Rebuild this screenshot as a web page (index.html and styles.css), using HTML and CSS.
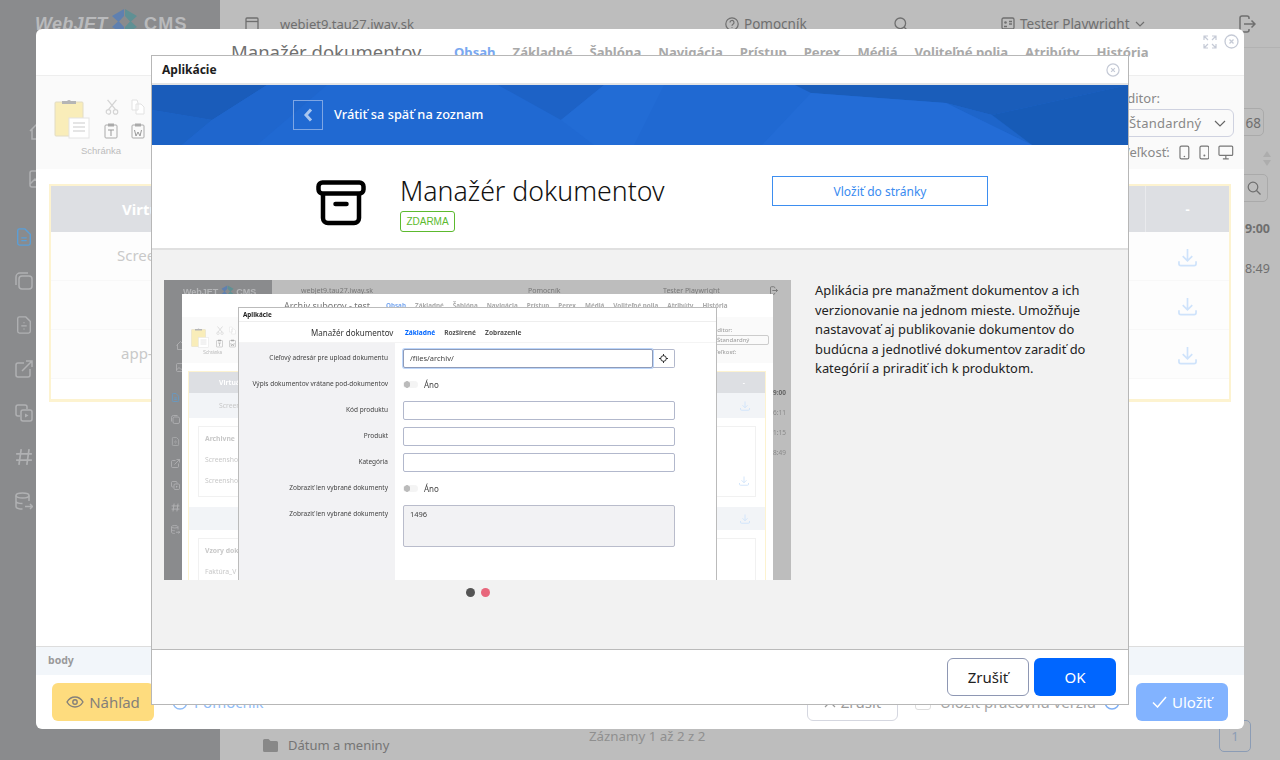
FILE: index.html
```html
<!DOCTYPE html>
<html lang="sk">
  <head>
    <meta charset="UTF-8" />
    <title>Aplikácie</title>
    <link rel="stylesheet" href="styles.css">
  </head>
  <body>
    <svg class="sprites" width="0" height="0">
      <symbol id="i-home" viewBox="0 0 18 18"><path d="M1 9l8-8 8 8M3 7v10h12V7" fill="none" stroke="currentColor" stroke-width="1.500"/></symbol>
      <symbol id="i-pic" viewBox="0 0 18 18"><rect x="1" y="1" width="16" height="16" rx="2" fill="none" stroke="currentColor" stroke-width="1.500"/><path d="M1 14l5-5 4 4 3-2 4 3" fill="none" stroke="currentColor" stroke-width="1.500"/></symbol>
      <symbol id="i-copy" viewBox="0 0 18 18"><rect x="4" y="4" width="13" height="13" rx="3" fill="none" stroke="currentColor" stroke-width="1.500"/><path d="M13 1H5a4 4 0 0 0-4 4v8" fill="none" stroke="currentColor" stroke-width="1.500"/></symbol>
      <symbol id="i-file" viewBox="0 0 16 20"><path d="M3 1h7l5 5v11a2 2 0 0 1-2 2H3a2 2 0 0 1-2-2V3a2 2 0 0 1 2-2zM5 11h6M8 7v1M8 14v1" fill="none" stroke="currentColor" stroke-width="1.500"/></symbol>
      <symbol id="i-ext" viewBox="0 0 18 18"><path d="M9 3H3a2 2 0 0 0-2 2v10a2 2 0 0 0 2 2h10a2 2 0 0 0 2-2V9M7 11L17 1M11 1h6v6" fill="none" stroke="currentColor" stroke-width="1.500"/></symbol>
      <symbol id="i-media" viewBox="0 0 18 18"><path d="M5 12H3a2 2 0 0 1-2-2V3a2 2 0 0 1 2-2h7a2 2 0 0 1 2 2v2" fill="none" stroke="currentColor" stroke-width="1.500"/><rect x="6" y="6" width="11" height="11" rx="2" fill="none" stroke="currentColor" stroke-width="1.500"/><path d="M10 9.500l3.500 2-3.500 2z" fill="currentColor"/></symbol>
      <symbol id="i-hash" viewBox="0 0 16 16"><path d="M5.500 1L3.500 15M12.500 1L10.500 15M1 5.200h14M1 10.800h14" fill="none" stroke="currentColor" stroke-width="1.500"/></symbol>
      <symbol id="i-db" viewBox="0 0 18 18"><ellipse cx="7.500" cy="3.500" rx="6.500" ry="2.500" fill="none" stroke="currentColor" stroke-width="1.500"/><path d="M1 3.500v11c0 1.400 2.900 2.500 6.500 2.500M14 3.500V9M1 9c0 1.400 2.900 2.500 6.500 2.500M10 14.500h7.500M15 12l2.500 2.500L15 17" fill="none" stroke="currentColor" stroke-width="1.500"/></symbol>
      <symbol id="i-down" viewBox="0 0 20 20"><path d="M10 1v12M5 8.500l5 5 5-5M1 14v2.500a2 2 0 0 0 2 2h14a2 2 0 0 0 2-2V14" fill="none" stroke="currentColor" stroke-width="1.800"/></symbol>
      <symbol id="i-clip" viewBox="0 0 36 42"><rect x="1" y="5" width="28" height="34" rx="1" fill="#f9edb9" stroke="#e2dcc4"/><path d="M8 7V4h5a3 3 0 0 1 4 0h5v3z" fill="#b5b5b5"/><rect x="15" y="21" width="20" height="20" fill="#fff" stroke="#e4e4e4"/><path d="M19 26h12M19 30h12M19 34h12" stroke="#ddd" stroke-width="1.500"/></symbol>
      <symbol id="i-scis" viewBox="0 0 16 18"><path d="M3 1l9 11M13 1L4 12" stroke="#d4d4d4" stroke-width="1.500"/><circle cx="4" cy="14.500" r="2.500" fill="none" stroke="#d4d4d4" stroke-width="1.300"/><circle cx="12" cy="14.500" r="2.500" fill="none" stroke="#d4d4d4" stroke-width="1.300"/></symbol>
      <symbol id="i-pages" viewBox="0 0 14 16"><path d="M1 1h5l1 3v7H1zM5 5h5l3 3v7H5z" fill="#fff" stroke="#e2e2e2"/></symbol>
      <symbol id="i-past" viewBox="0 0 14 16"><rect x="1" y="2" width="12" height="13" rx="1" fill="none" stroke="#aaa"/><rect x="4" y="0.500" width="6" height="3" fill="#aaa"/><path d="M4 7h6M7 7v6" stroke="#999"/></symbol>
      <symbol id="i-pasw" viewBox="0 0 14 16"><rect x="1" y="2" width="12" height="13" rx="1" fill="none" stroke="#aaa"/><rect x="4" y="0.500" width="6" height="3" fill="#aaa"/><path d="M3.500 7l1.500 6 2-4 2 4 1.500-6" fill="none" stroke="#999"/></symbol>
    </svg>

    <div class="page">
      <aside class="side">
        <div class="logo">
          <span class="logo-web">WebJET</span>
          <svg class="logo-mark" width="27" height="27" viewBox="0 0 27 27"><path d="M13 1L1 8l6 5.500L1 19l12 7V19l-5-5.500L13 8z" fill="#5f80b0"/><path d="M14 1l12 7-6 5.500 6 5.500-12 7V19l5-5.500L14 8z" fill="#5f9094"/></svg>
          <span class="logo-cms">CMS</span>
        </div>
        <nav class="side-nav">
          <svg class="side-ico side-ico-far"><use href="#i-home"/></svg>
          <svg class="side-ico side-ico-far side-ico-end"><use href="#i-pic"/></svg>
          <svg class="side-ico" viewBox="0 0 16 20"><path d="M3 1h6l6 6v10a2 2 0 0 1-2 2H3a2 2 0 0 1-2-2V3a2 2 0 0 1 2-2zM5 11h6M5 14h6" fill="none" stroke="#5a9fd8" stroke-width="1.500"/></svg>
          <svg class="side-ico"><use href="#i-copy"/></svg>
          <svg class="side-ico"><use href="#i-file"/></svg>
          <svg class="side-ico"><use href="#i-ext"/></svg>
          <svg class="side-ico"><use href="#i-media"/></svg>
          <svg class="side-ico"><use href="#i-hash"/></svg>
          <svg class="side-ico"><use href="#i-db"/></svg>
        </nav>
      </aside>
      <main class="main">
        <header class="top">
          <span class="top-domain">
            <svg width="14" height="14" viewBox="0 0 14 14"><rect x="1" y="1" width="12" height="12" rx="1" fill="none" stroke="currentColor" stroke-width="1.300"/><path d="M1 4.500h12" stroke="currentColor" stroke-width="1.300"/></svg>
            webjet9.tau27.iway.sk
          </span>
          <span class="top-help">
            <svg width="14" height="14" viewBox="0 0 14 14"><circle cx="7" cy="7" r="6.200" fill="none" stroke="currentColor" stroke-width="1.200"/><path d="M5 5.500a2 2 0 1 1 3 1.700c-.7.400-1 .8-1 1.500M7 10.300v.7" fill="none" stroke="currentColor" stroke-width="1.200"/></svg>
            Pomocník
          </span>
          <svg class="top-search" width="14" height="14" viewBox="0 0 14 14"><circle cx="6.300" cy="6.300" r="5.300" fill="none" stroke="currentColor" stroke-width="1.300"/><path d="M10 10l3.500 3.500" stroke="currentColor" stroke-width="1.300"/></svg>
          <span class="top-user">
            <svg width="14" height="13" viewBox="0 0 14 13"><rect x="1" y="1" width="12" height="11" rx="1.500" fill="none" stroke="currentColor" stroke-width="1.300"/><path d="M3 9.500h3M8 4.500h3M8 7h3" stroke="currentColor" stroke-width="1.300"/><circle cx="4.500" cy="5.500" r="1.300" fill="currentColor"/></svg>
            Tester Playwright
            <svg width="10" height="6" viewBox="0 0 10 6"><path d="M1 1l4 4 4-4" fill="none" stroke="currentColor" stroke-width="1.200"/></svg>
          </span>
          <svg class="top-out" width="17" height="18" viewBox="0 0 17 18"><path d="M10 4V3a2 2 0 0 0-2-2H3a2 2 0 0 0-2 2v12a2 2 0 0 0 2 2h5a2 2 0 0 0 2-2v-1M5 9h11M12.500 5.500L16 9l-3.500 3.500" fill="none" stroke="currentColor" stroke-width="1.500"/></svg>
        </header>
        <div class="tail">
          <div class="tail-box">68</div>
          <div class="tail-sort">
            <i class="sort-up"></i>
            <i class="sort-down"></i>
          </div>
          <div class="tail-search">
            <svg width="14" height="14" viewBox="0 0 14 14"><circle cx="6" cy="6" r="4.800" fill="none" stroke="currentColor" stroke-width="1.200"/><path d="M9.500 9.500l4 4" stroke="currentColor" stroke-width="1.200"/></svg>
          </div>
          <div class="tail-time tail-time-b">9:00</div>
          <div class="tail-time">8:49</div>
        </div>
        <footer class="bottom">
          <div class="bottom-tree">
            <svg width="15" height="13" viewBox="0 0 15 13"><path d="M1.500 0h4l2 2h6A1.500 1.500 0 0 1 15 3.500V11.500A1.500 1.500 0 0 1 13.500 13h-12A1.500 1.500 0 0 1 0 11.500v-10A1.500 1.500 0 0 1 1.500 0z" fill="currentColor"/></svg>
            Dátum a meniny
          </div>
          <div class="bottom-info">Záznamy 1 až 2 z 2</div>
          <div class="bottom-page">1</div>
        </footer>
      </main>
    </div>

    <section class="editor">
      <div class="editor-head">
        <h2 class="editor-title">Manažér dokumentov</h2>
        <div class="tabs">
          <span class="tab tab-on">Obsah</span>
          <span class="tab">Základné</span>
          <span class="tab">Šablóna</span>
          <span class="tab">Navigácia</span>
          <span class="tab">Prístup</span>
          <span class="tab">Perex</span>
          <span class="tab">Médiá</span>
          <span class="tab">Voliteľné polia</span>
          <span class="tab">Atribúty</span>
          <span class="tab">História</span>
        </div>
        <div class="editor-win">
          <svg width="14" height="14" viewBox="0 0 14 14"><path d="M1 5V1h4M1 1l4 4M13 5V1H9M13 1L9 5M1 9v4h4M1 13l4-4M13 9v4H9M13 13L9 9" fill="none" stroke="#c5cad6" stroke-width="1.200"/></svg>
          <svg width="15" height="15" viewBox="0 0 15 15"><circle cx="7.500" cy="7.500" r="6.500" fill="none" stroke="#c5cad6" stroke-width="1.300"/><path d="M5.500 5.500l4 4M9.500 5.500l-4 4" stroke="#c5cad6" stroke-width="1.300"/></svg>
        </div>
      </div>
      <div class="ribbon">
        <div class="ribbon-clip">
          <div class="ribbon-tools">
            <svg width="36" height="42"><use href="#i-clip"/></svg>
            <div class="ribbon-small">
              <svg width="16" height="16"><use href="#i-scis"/></svg>
              <svg width="14" height="16"><use href="#i-pages"/></svg>
              <svg width="14" height="16"><use href="#i-past"/></svg>
              <svg width="14" height="16"><use href="#i-pasw"/></svg>
            </div>
          </div>
          <div class="ribbon-label">Schránka</div>
        </div>
        <div class="ribbon-side">
          <div class="ribbon-editor">Editor:</div>
          <div class="ribbon-select">
            <span>Štandardný</span>
            <svg width="12" height="7" viewBox="0 0 12 7"><path d="M1 1l5 5 5-5" fill="none" stroke="#666" stroke-width="1.200"/></svg>
          </div>
          <div class="ribbon-size">
            <span>Veľkosť:</span>
            <svg width="11" height="15" viewBox="0 0 11 15"><rect x="1" y="1" width="9" height="13" rx="1.500" fill="none" stroke="#777" stroke-width="1.200"/><circle cx="5.500" cy="11.500" r=".8" fill="#777"/></svg>
            <svg width="11" height="15" viewBox="0 0 11 15"><rect x="1" y="1" width="9" height="13" rx="1.500" fill="none" stroke="#777" stroke-width="1.200"/><circle cx="5.500" cy="10.500" r="1" fill="#777"/></svg>
            <svg width="16" height="15" viewBox="0 0 16 15"><rect x="1" y="1" width="14" height="9.500" rx="1" fill="none" stroke="#777" stroke-width="1.200"/><path d="M5 14h6M8 11v3" stroke="#777" stroke-width="1.200"/></svg>
          </div>
        </div>
      </div>
      <div class="editor-body">
        <div class="frame">
          <div class="frame-head">
            <span class="frame-th">Virtuálna cesta</span>
            <span class="frame-dash">-</span>
          </div>
          <div class="frame-row">
            <span class="frame-name">Screenshot</span>
            <svg class="frame-down"><use href="#i-down"/></svg>
          </div>
          <div class="frame-row">
            <span class="frame-name"></span>
            <svg class="frame-down"><use href="#i-down"/></svg>
          </div>
          <div class="frame-row frame-last">
            <span class="frame-name frame-name-alt">app-</span>
            <svg class="frame-down"><use href="#i-down"/></svg>
          </div>
        </div>
      </div>
      <div class="crumb">body</div>
      <div class="editor-foot">
        <button class="btn-preview">
          <svg width="18" height="12" viewBox="0 0 18 12"><path d="M1 6c2-3.300 4.700-5 8-5s6 1.700 8 5c-2 3.300-4.700 5-8 5S3 9.300 1 6z" fill="none" stroke="currentColor" stroke-width="1.400"/><circle cx="9" cy="6" r="2.200" fill="none" stroke="currentColor" stroke-width="1.400"/></svg>
          Náhľad
        </button>
        <span class="foot-help">
          <svg width="16" height="16" viewBox="0 0 16 16"><circle cx="8" cy="8" r="7" fill="none" stroke="currentColor" stroke-width="1.300"/></svg>
          Pomocník
        </span>
        <button class="btn-cancel">
          <svg width="12" height="12" viewBox="0 0 12 12"><path d="M1 1l10 10M11 1L1 11" stroke="currentColor" stroke-width="1.200"/></svg>
          Zrušiť
        </button>
        <span class="foot-work">
          <i class="foot-check"></i>
          Uložiť pracovnú verziu
          <svg width="16" height="16" viewBox="0 0 16 16"><circle cx="8" cy="8" r="7" fill="none" stroke="#7fb0f5" stroke-width="1.500"/></svg>
        </span>
        <button class="btn-save">
          <svg width="15" height="12" viewBox="0 0 15 12"><path d="M1 6.500L5.500 11 14 1" fill="none" stroke="currentColor" stroke-width="1.500"/></svg>
          Uložiť
        </button>
      </div>
    </section>

    <section class="apps">
      <div class="apps-head">
        <h3 class="apps-title">Aplikácie</h3>
        <svg width="14" height="14" viewBox="0 0 15 15"><circle cx="7.500" cy="7.500" r="6.500" fill="none" stroke="#c5cad6" stroke-width="1.300"/><path d="M5.500 5.500l4 4M9.500 5.500l-4 4" stroke="#c5cad6" stroke-width="1.300"/></svg>
      </div>
      <div class="banner">
        <svg class="banner-bg" viewBox="0 0 976 60" preserveAspectRatio="none">
          <rect width="976" height="60" fill="#2069d2"/>
          <path d="M0 0h115L60 35 0 25z" fill="#1a5cba"/>
          <path d="M0 25l60 10-30 25H0z" fill="#1c62c4"/>
          <path d="M115 0h60l-70 60H30l30-25z" fill="#1f66cd"/>
          <path d="M346 0h106l-43 35z" fill="#1d62c6"/>
          <path d="M409 35l43-35h60l-30 60h-40z" fill="#226cd5"/>
          <path d="M643 0h333L840 30l-46-12-135-10z" fill="#1a5dba"/>
          <path d="M794 18l46 12 40 30z" fill="#1e65ca"/>
          <path d="M840 30L976 0v60H880z" fill="#175bb7"/>
          <path d="M659 8l135 10 86 42H610z" fill="#236cd6"/>
        </svg>
        <button class="banner-back">
          <svg width="10" height="14" viewBox="0 0 10 14"><path d="M8 1.500L3 7l5 5.500" fill="none" stroke="#a9c6ef" stroke-width="3"/></svg>
        </button>
        <span class="banner-text">Vrátiť sa späť na zoznam</span>
      </div>
      <div class="hero">
        <svg class="hero-ico" width="50" height="46" viewBox="0 0 50 46"><rect x="2.500" y="2.500" width="45" height="11" rx="4" fill="none" stroke="#000" stroke-width="4.500"/><path d="M7 14v24a5 5 0 0 0 5 5h26a5 5 0 0 0 5-5V14" fill="none" stroke="#000" stroke-width="4.500"/><path d="M19.500 24h11" stroke="#000" stroke-width="4.500" stroke-linecap="round"/></svg>
        <div class="hero-info">
          <h1 class="hero-title">Manažér dokumentov</h1>
          <span class="hero-tag">ZDARMA</span>
        </div>
        <button class="hero-btn">Vložiť do stránky</button>
      </div>
      <div class="detail">
        <div class="gallery">
          <div class="shot">
            <div class="mp-side">
              <div class="mp-logo">WebJET <svg width="13" height="13" viewBox="0 0 27 27"><path d="M13 1L1 8l6 5.500L1 19l12 7V19l-5-5.500L13 8z" fill="#5f80b0"/><path d="M14 1l12 7-6 5.500 6 5.500-12 7V19l5-5.500L14 8z" fill="#5f9094"/></svg> CMS</div>
              <div class="mp-ico">
                <svg class="mp-ico-far"><use href="#i-home"/></svg>
                <svg class="mp-ico-far mp-ico-end"><use href="#i-pic"/></svg>
                <svg viewBox="0 0 16 20"><path d="M3 1h6l6 6v10a2 2 0 0 1-2 2H3a2 2 0 0 1-2-2V3a2 2 0 0 1 2-2zM5 11h6M5 14h6" fill="none" stroke="#5a9fd8" stroke-width="1.500"/></svg>
                <svg><use href="#i-copy"/></svg>
                <svg><use href="#i-file"/></svg>
                <svg><use href="#i-ext"/></svg>
                <svg><use href="#i-media"/></svg>
                <svg><use href="#i-hash"/></svg>
                <svg><use href="#i-db"/></svg>
              </div>
            </div>
            <div class="mp-top">
              <span class="mp-top-dom">webjet9.tau27.iway.sk</span>
              <span class="mp-top-help">Pomocník</span>
              <span class="mp-top-user">Tester Playwright</span>
              <svg width="8" height="9" viewBox="0 0 17 18"><path d="M10 4V3a2 2 0 0 0-2-2H3a2 2 0 0 0-2 2v12a2 2 0 0 0 2 2h5a2 2 0 0 0 2-2v-1M5 9h11M12.500 5.500L16 9l-3.500 3.500" fill="none" stroke="currentColor" stroke-width="2"/></svg>
            </div>
            <div class="mp-times">
              <span class="mp-time-b">9:00</span>
              <span>6:11</span>
              <span>1:15</span>
              <span>8:49</span>
            </div>

            <div class="m1">
              <div class="m1-head">
                <span class="m1-title">Archiv suborov - test</span>
                <span class="m1-tabs">
                  <b class="m1-on">Obsah</b><b>Základné</b><b>Šablóna</b><b>Navigácia</b><b>Prístup</b><b>Perex</b><b>Médiá</b><b>Voliteľné polia</b><b>Atribúty</b><b>História</b>
                </span>
              </div>
              <div class="m1-ribbon">
                <div class="m1-clip">
                  <div class="m1-tools">
                    <svg width="18" height="23"><use href="#i-clip"/></svg>
                    <div class="m1-small">
                      <svg width="8" height="9"><use href="#i-scis"/></svg>
                      <svg width="7" height="9"><use href="#i-pages"/></svg>
                      <svg width="7" height="9"><use href="#i-past"/></svg>
                      <svg width="7" height="9"><use href="#i-pasw"/></svg>
                    </div>
                  </div>
                  <span class="m1-label">Schránka</span>
                </div>
                <div class="m1-opts">
                  <span>Editor:</span>
                  <span class="m1-sel">Štandardný</span>
                  <span>Veľkosť:</span>
                </div>
              </div>
              <div class="m1-table">
                <div class="m1-th"><b>Virtuálna</b><b class="m1-dash">-</b></div>
                <div class="m1-tr"><span>Screenshot</span><svg><use href="#i-down"/></svg></div>
                <div class="m1-card">
                  <b>Archivne</b>
                  <span>Screenshot</span>
                  <div class="m1-card-row"><span>Screenshot</span><svg><use href="#i-down"/></svg></div>
                </div>
                <div class="m1-tr m1-tr-2"><span></span><svg><use href="#i-down"/></svg></div>
                <div class="m1-card">
                  <b>Vzory dokumentov</b>
                  <span>Faktúra_V</span>
                </div>
              </div>
            </div>

            <div class="m2">
              <div class="m2-head">Aplikácie</div>
              <div class="m2-sub">
                <span class="m2-name">Manažér dokumentov</span>
                <span class="m2-tabs"><b class="m2-on">Základné</b><b>Rozšírené</b><b>Zobrazenie</b></span>
              </div>
              <div class="m2-form">
                <label>Cieľový adresár pre upload dokumentu</label>
                <div class="m2-path"><span class="m2-input m2-focus">/files/archiv/</span><span class="m2-pick"><svg width="9" height="9" viewBox="0 0 9 9"><circle cx="4.500" cy="4.500" r="2.800" fill="none" stroke="#333"/><path d="M4.500 0v2M4.500 7v2M0 4.500h2M7 4.500h2" stroke="#333"/></svg></span></div>
                <label>Výpis dokumentov vrátane pod-dokumentov</label>
                <div class="m2-toggle"><i></i>Áno</div>
                <label>Kód produktu</label>
                <span class="m2-input"></span>
                <label>Produkt</label>
                <span class="m2-input"></span>
                <label>Kategória</label>
                <span class="m2-input"></span>
                <label>Zobraziť len vybrané dokumenty</label>
                <div class="m2-toggle"><i></i>Áno</div>
                <label>Zobraziť len vybrané dokumenty</label>
                <span class="m2-input m2-area">1496</span>
              </div>
            </div>
          </div>
          <div class="dots"><i class="dot"></i><i class="dot dot-on"></i></div>
        </div>
        <p class="detail-text">Aplikácia pre manažment dokumentov a ich verzionovanie na jednom mieste. Umožňuje nastavovať aj publikovanie dokumentov do budúcna a jednotlivé dokumentov zaradiť do kategórií a priradiť ich k produktom.</p>
      </div>
      <div class="apps-foot">
        <button class="btn-plain">Zrušiť</button>
        <button class="btn-ok">OK</button>
      </div>
    </section>
  </body>
</html>
```

FILE: styles.css
```css
html, body {
  margin: 0;
  height: 100%;
  overflow: hidden;
}
body {
  font-family: "Noto Sans", Arial, sans-serif;
  background-color: #bdbdbd;
  color: #222;
  position: relative;
}
h1, h2, h3, p {
  margin: 0;
  font-weight: normal;
}
button {
  font-family: inherit;
  cursor: pointer;
}
.sprites {
  position: absolute;
}

/* pagina en el fondo */
.page {
  display: flex;
  height: 760px;
}
.side {
  width: 220px;
  background-color: #8a8b8d;
  flex: none;
}
.logo {
  display: flex;
  align-items: center;
  height: 50px;
  padding: 0 0 2px 35px;
  box-sizing: border-box;
  color: #b9babc;
  font-family: "Liberation Sans", sans-serif;
  font-weight: bold;
  font-size: 18px;
}
.logo-web {
  font-style: italic;
  width: 76px;
  letter-spacing: .3px;
  white-space: nowrap;
}
.logo-mark {
  flex: none;
  margin-top: -6px;
}
.logo-cms {
  margin-left: 6px;
  letter-spacing: 1.300px;
}
.side-nav {
  display: flex;
  flex-direction: column;
  gap: 26px;
  padding: 72px 0 0 15px;
}
.side-ico {
  width: 18px;
  height: 18px;
  color: #b0b1b3;
}
.side-ico-far {
  margin: 0 0 4px 14px;
}
.side-ico-end {
  margin-bottom: 14px;
}
.main {
  flex: 1;
  display: flex;
  flex-direction: column;
  color: #6f6f6f;
  font-size: 13.500px;
}
.top {
  height: 47px;
  display: flex;
  align-items: center;
  border-bottom: 1px solid #b2b2b2;
  position: relative;
}
.top span {
  display: flex;
  align-items: center;
  gap: 5px;
}
.top-domain {
  margin-left: 25px;
  width: 480px;
  gap: 21px !important;
  font-size: 13px;
}
.top-help {
  width: 169px;
}
.top-search {
  margin-right: 93px;
}
.top-user {
  width: 238px;
}
.tail {
  flex: 1;
  display: flex;
  flex-direction: column;
  align-items: flex-end;
  padding: 60px 12px 0 0;
}
.tail-box {
  width: 32px;
  height: 28px;
  border: 1px solid #aaa;
  border-radius: 5px;
  text-align: right;
  padding-right: 2px;
  line-height: 28px;
  box-sizing: border-box;
  margin-right: 4px;
}
.tail-sort {
  margin: 15px -3px 8px 0;
  display: flex;
  flex-direction: column;
  gap: 3px;
}
.tail-sort i {
  display: block;
  border-left: 4px solid transparent;
  border-right: 4px solid transparent;
}
.sort-up {
  border-bottom: 6px solid #adadad;
}
.sort-down {
  border-top: 6px solid #adadad;
}
.tail-search {
  width: 40px;
  height: 28px;
  border: 1px solid #aaa;
  border-radius: 5px;
  display: flex;
  align-items: center;
  justify-content: flex-end;
  padding-right: 6px;
  box-sizing: border-box;
}
.tail-time {
  font-size: 12.500px;
  width: 23px;
  margin-top: 23px;
}
.tail-time-b {
  font-weight: bold;
  margin-top: 18px;
}
.bottom {
  height: 48px;
  display: flex;
  align-items: center;
  font-size: 13px;
  color: #757575;
}
.bottom-tree {
  display: flex;
  align-items: center;
  gap: 10px;
  margin: 18px 0 0 43px;
  width: 326px;
}
.bottom-tree svg {
  color: #888;
}
.bottom-info {
  width: 630px;
  font-size: 13.300px;
  color: #8f8f8f;
}
.bottom-page {
  width: 30px;
  height: 30px;
  border: 1px solid #8b9cb5;
  border-radius: 5px;
  text-align: center;
  line-height: 30px;
  color: #8b9cb5;
}

/* modal del editor */
.editor {
  position: absolute;
  left: 36px;
  top: 29px;
  width: 1208px;
  height: 700px;
  background-color: white;
  border-radius: 6px;
  display: flex;
  flex-direction: column;
  overflow: hidden;
}
.editor-head {
  height: 47px;
  flex: none;
  border-bottom: 1px solid #eee;
  display: flex;
  align-items: flex-start;
  padding: 10px 0 0 195px;
  box-sizing: border-box;
  position: relative;
}
.editor-title {
  font-size: 18.500px;
  color: #717171;
  line-height: 26px;
  width: 223px;
  white-space: nowrap;
}
.tabs {
  display: flex;
  gap: 17px;
  padding-top: 4px;
}
.tab {
  font-size: 13.100px;
  font-weight: bold;
  color: #a9a9a9;
  white-space: nowrap;
}
.tab-on {
  color: #79a8f0;
}
.editor-win {
  position: absolute;
  right: 5px;
  top: 5px;
  display: flex;
  gap: 7px;
  align-items: center;
}
.ribbon {
  height: 93px;
  flex: none;
  background-color: #fafafa;
  display: flex;
  justify-content: space-between;
  padding: 0 10px 0 18px;
  box-sizing: border-box;
}
.ribbon-tools {
  display: flex;
  gap: 14px;
  padding-top: 21px;
}
.ribbon-small {
  display: grid;
  grid-template-columns: 16px 14px;
  column-gap: 11px;
  row-gap: 8px;
  align-content: start;
  padding-top: 2px;
}
.ribbon-label {
  font-family: "Liberation Sans", sans-serif;
  font-size: 9.500px;
  color: #bcbcbc;
  margin: 6px 0 0 27px;
}
.ribbon-side {
  font-size: 13px;
  color: #888;
  padding-top: 13px;
  width: 130px;
  display: flex;
  flex-direction: column;
}
.ribbon-editor {
  line-height: 18px;
  padding-left: 16px;
}
.ribbon-select {
  height: 28px;
  margin-top: 2px;
  border: 1px solid #cfd2e0;
  border-radius: 6px;
  display: flex;
  align-items: center;
  justify-content: space-between;
  padding: 0 7px 0 24px;
  box-sizing: border-box;
  letter-spacing: .2px;
}
.ribbon-size {
  display: flex;
  align-items: center;
  gap: 9px;
  margin-top: 6px;
  padding-left: 18px;
  white-space: nowrap;
}
.editor-body {
  flex: 1;
  padding: 15px 13px 0 13px;
}
.frame {
  border: 2px solid #fdf3d0;
  border-bottom-width: 3px;
  height: 218px;
  box-sizing: border-box;
}
.frame-head {
  height: 46px;
  background-color: #dddfe3;
  color: white;
  font-weight: bold;
  font-size: 15px;
  display: flex;
  align-items: center;
  justify-content: space-between;
}
.frame-th {
  padding-left: 71px;
}
.frame-dash {
  width: 84px;
  height: 46px;
  line-height: 46px;
  text-align: center;
  border-left: 1px solid #e9eaed;
  box-sizing: border-box;
  font-size: 13px;
}
.frame-row {
  height: 49px;
  display: flex;
  align-items: center;
  justify-content: space-between;
  background-color: #fdfdfd;
  border-bottom: 1px solid #f8f8f8;
  box-sizing: border-box;
  font-size: 15px;
  color: #c9c9c9;
  padding-left: 66px;
}
.frame-name {
  padding-bottom: 3px;
}
.frame-name-alt {
  padding-left: 4px;
}
.frame-down {
  width: 19px;
  height: 19px;
  color: #cfe3fb;
  margin: 3px 32px 0 0;
}
.crumb {
  flex: none;
  height: 29px;
  border-top: 1px solid #ddd;
  box-sizing: border-box;
  background-color: #f2f6fa;
  font-size: 10.500px;
  font-weight: bold;
  color: #9a9a9a;
  line-height: 26px;
  padding-left: 12px;
}
.editor-foot {
  height: 54px;
  flex: none;
  display: flex;
  align-items: flex-start;
  padding: 8px 16px 0;
  box-sizing: border-box;
  font-size: 15px;
}
.editor-foot button {
  height: 38px;
  border-radius: 6px;
  display: flex;
  align-items: center;
  justify-content: center;
  gap: 5px;
  font-size: 15px;
}
.btn-preview {
  width: 102px;
  border: none;
  background-color: #fedc7e;
  color: #84807a;
}
.foot-help {
  display: flex;
  align-items: center;
  gap: 6px;
  margin: 9px 0 0 18px;
  width: 635px;
  color: #8fbcf7;
}
.btn-cancel {
  width: 91px;
  background-color: white;
  border: 1px solid #d5d7e0;
  color: #9b9b9b;
}
.foot-work {
  display: flex;
  align-items: center;
  gap: 8px;
  margin: 9px 0 0 17px;
  width: 221px;
  color: #a5a5a5;
  white-space: nowrap;
}
.foot-check {
  width: 14px;
  height: 14px;
  border: 1px solid #ddd;
  border-radius: 3px;
  margin-right: 1px;
}
.btn-save {
  width: 92px;
  border: none;
  background-color: #82b3ff;
  color: white;
}

/* modal de aplicaciones */
.apps {
  position: absolute;
  left: 151px;
  top: 55px;
  width: 978px;
  height: 650px;
  background-color: white;
  border: 1px solid #b7b7b7;
  box-sizing: border-box;
  display: flex;
  flex-direction: column;
}
.apps-head {
  flex: none;
  height: 29px;
  box-sizing: border-box;
  border-bottom: 2px solid #e4e4e4;
  display: flex;
  align-items: center;
  justify-content: space-between;
  padding: 0 8px 0 10px;
}
.apps-title {
  font-size: 12px;
  font-weight: bold;
  color: #1d1d1d;
}
.banner {
  flex: none;
  height: 60px;
  display: flex;
  align-items: center;
  padding-left: 141px;
  position: relative;
  overflow: hidden;
}
.banner-bg {
  position: absolute;
  left: 0;
  top: 0;
  width: 100%;
  height: 100%;
}
.banner-back {
  position: relative;
  width: 30px;
  height: 30px;
  background: transparent;
  border: 1px solid #7ea6e4;
  padding: 0;
  display: flex;
  align-items: center;
  justify-content: center;
}
.banner-text {
  position: relative;
  margin: 0 0 2px 11px;
  font-size: 12.800px;
  font-weight: 500;
  color: white;
}
.hero {
  flex: none;
  height: 105px;
  box-sizing: border-box;
  border-bottom: 2px solid #e0e0e0;
  display: flex;
  padding-left: 164px;
}
.hero-ico {
  margin-top: 35px;
}
.hero-info {
  margin: 28px 0 0 34px;
  width: 372px;
}
.hero-title {
  font-size: 26.700px;
  font-weight: 300;
  line-height: 36px;
  color: #111;
  white-space: nowrap;
}
.hero-tag {
  display: block;
  margin-top: 2px;
  width: 55px;
  height: 21px;
  border: 1px solid #5cba2e;
  border-radius: 3px;
  box-sizing: border-box;
  color: #5cba2e;
  font-family: "Liberation Sans", sans-serif;
  font-size: 10px;
  line-height: 19px;
  text-align: center;
}
.hero-btn {
  margin-top: 31px;
  width: 216px;
  height: 30px;
  border: 1px solid #3d8ef0;
  background-color: white;
  color: #3a8bf0;
  font-size: 12px;
}
.detail {
  flex: 1;
  background-color: #f2f2f2;
  display: flex;
  padding: 30px 0 0 12px;
}
.gallery {
  width: 627px;
  flex: none;
}
.shot {
  width: 627px;
  height: 300px;
  background-color: #bdbdbd;
  position: relative;
  overflow: hidden;
  filter: blur(.35px);
}
.dots {
  display: flex;
  justify-content: center;
  gap: 6px;
  margin-top: 8px;
}
.dot {
  width: 9px;
  height: 9px;
  border-radius: 50%;
  background-color: #555;
}
.dot-on {
  background-color: #e8677c;
}
.detail-text {
  margin: 1px 0 0 24px;
  width: 282px;
  font-size: 12.900px;
  line-height: 19.500px;
  color: #222;
}
.apps-foot {
  flex: none;
  height: 55px;
  border-top: 1px solid #bbb;
  box-sizing: border-box;
  display: flex;
  justify-content: flex-end;
  align-items: center;
  gap: 5px;
  padding-right: 12px;
}
.apps-foot button {
  width: 82px;
  height: 38px;
  border-radius: 6px;
  font-size: 15px;
}
.btn-plain {
  background-color: white;
  border: 1px solid #8e97b3;
  color: #222;
}
.btn-ok {
  background-color: #0066ff;
  border: none;
  color: white;
}

/* captura dentro de la galeria */
.mp-side {
  position: absolute;
  left: 0;
  top: 0;
  bottom: 0;
  width: 108px;
  background-color: #8a8b8d;
  color: #b5b6b8;
}
.mp-logo {
  font-family: "Liberation Sans", sans-serif;
  font-weight: bold;
  font-size: 9px;
  line-height: 12px;
  white-space: nowrap;
  padding: 5px 0 0 19px;
}
.mp-logo svg {
  vertical-align: -3px;
}
.mp-ico {
  display: flex;
  flex-direction: column;
  gap: 13px;
  padding: 43px 0 0 7px;
}
.mp-ico svg {
  width: 9px;
  height: 9px;
}
.mp-ico-far {
  margin-left: 5px;
}
.mp-ico-end {
  margin-bottom: 8px;
}
.mp-top {
  position: absolute;
  left: 137px;
  top: 6px;
  display: flex;
  align-items: center;
  font-size: 7px;
  color: #777;
  white-space: nowrap;
}
.mp-top-dom {
  width: 227px;
}
.mp-top-help {
  width: 135px;
}
.mp-top-user {
  width: 107px;
}
.mp-times {
  position: absolute;
  right: 5px;
  top: 108px;
  display: flex;
  flex-direction: column;
  gap: 11px;
  font-size: 6.500px;
  line-height: 9px;
  color: #8a8a8a;
}
.mp-time-b {
  font-weight: bold;
  color: #666;
}
.m1 {
  position: absolute;
  left: 18px;
  top: 14px;
  width: 591px;
  height: 300px;
  background-color: white;
  display: flex;
  flex-direction: column;
}
.m1-head {
  height: 23px;
  flex: none;
  display: flex;
  align-items: center;
  padding-left: 102px;
  font-size: 9px;
  color: #777;
  overflow: hidden;
}
.m1-title {
  width: 102px;
  white-space: nowrap;
}
.m1-tabs {
  display: flex;
  gap: 9px;
  font-size: 6.300px;
  color: #aaa;
  white-space: nowrap;
}
.m1-on {
  color: #79a8f0;
}
.m1-ribbon {
  height: 46px;
  flex: none;
  background-color: #fafafa;
  display: flex;
  justify-content: space-between;
  padding: 9px 4px 0 9px;
  box-sizing: border-box;
}
.m1-tools {
  display: flex;
  gap: 7px;
}
.m1-small {
  display: grid;
  grid-template-columns: 8px 7px;
  column-gap: 5px;
  row-gap: 4px;
  align-content: start;
}
.m1-label {
  display: block;
  font-family: "Liberation Sans", sans-serif;
  font-size: 4.500px;
  line-height: 8px;
  color: #bbb;
  padding-left: 12px;
}
.m1-opts {
  width: 55px;
  display: flex;
  flex-direction: column;
  font-size: 6px;
  color: #999;
}
.m1-sel {
  border: 1px solid #ccc;
  border-radius: 2px;
  margin: 1px 0 3px;
  padding: 0 2px;
}
.m1-table {
  margin: 8px 7px 0 6px;
  border: 1px solid #fdf3d0;
  font-size: 6.800px;
  color: #c8c8c8;
  flex: 1;
}
.m1-th {
  height: 21px;
  background-color: #dddfe3;
  color: white;
  display: flex;
  align-items: center;
  justify-content: space-between;
  padding: 0 20px 0 30px;
}
.m1-tr {
  height: 25px;
  background-color: #f2f4f7;
  display: flex;
  align-items: center;
  justify-content: space-between;
  padding: 0 15px 0 30px;
}
.m1-tr-2 {
  height: 23px;
}
.m1-tr svg, .m1-card-row svg {
  width: 10px;
  height: 10px;
  color: #cfe3fb;
}
.m1-card {
  margin: 8px 9px 10px;
  height: 71px;
  border: 1px solid #f1f1f1;
  display: flex;
  flex-direction: column;
  gap: 12px;
  padding: 7px 6px;
  box-sizing: border-box;
}
.m1-card-row {
  display: flex;
  justify-content: space-between;
}
.m2 {
  position: absolute;
  left: 74px;
  top: 27px;
  width: 479px;
  height: 290px;
  background-color: white;
  border: 1px solid #bbb;
  box-sizing: border-box;
}
.m2-head {
  height: 14px;
  box-sizing: border-box;
  border-bottom: 1px solid #eee;
  font-size: 6.300px;
  font-weight: bold;
  color: #222;
  line-height: 13px;
  padding-left: 4px;
}
.m2-sub {
  height: 21px;
  display: flex;
  align-items: center;
  border-bottom: 1px solid #f4f4f4;
  box-sizing: border-box;
  padding-left: 72px;
  font-size: 8px;
  color: #333;
}
.m2-name {
  width: 94px;
  white-space: nowrap;
}
.m2-tabs {
  display: flex;
  gap: 9px;
  font-size: 6.600px;
  color: #555;
}
.m2-on {
  color: #0066ff;
}
.m2-form {
  display: grid;
  grid-template-columns: 149px 272px;
  column-gap: 15px;
  row-gap: 7px;
  grid-auto-rows: 19px;
  padding: 6px 0 60px 0;
  background: linear-gradient(90deg, #f2f2f4 156px, white 156px);
  height: 260px;
  box-sizing: border-box;
  align-content: start;
}
.m2-form label {
  font-size: 6.500px;
  color: #444;
  text-align: right;
  line-height: 17px;
  white-space: nowrap;
}
.m2-input {
  display: block;
  height: 19px;
  border: 1px solid #b2b8cc;
  border-radius: 2px;
  background-color: white;
  box-sizing: border-box;
  font-size: 7.500px;
  line-height: 17px;
  padding-left: 6px;
  color: #444;
}
.m2-path {
  display: flex;
}
.m2-focus {
  flex: 1;
  box-shadow: 0 0 0 1px #bcd6fb;
  border-color: #8f9bb8;
}
.m2-pick {
  width: 22px;
  height: 19px;
  border: 1px solid #b2b8cc;
  border-left: none;
  border-radius: 0 2px 2px 0;
  box-sizing: border-box;
  display: flex;
  align-items: center;
  justify-content: center;
}
.m2-toggle {
  display: flex;
  align-items: center;
  gap: 6px;
  font-size: 8px;
  color: #444;
}
.m2-toggle i {
  width: 15px;
  height: 7px;
  border-radius: 4px;
  background: radial-gradient(circle at 4px 3.500px, #bbb 3px, #f4f4f4 3.500px);
}
.m2-area {
  height: 42px;
  background-color: #f2f2f4;
  border-color: #b9bccb;
}
```
